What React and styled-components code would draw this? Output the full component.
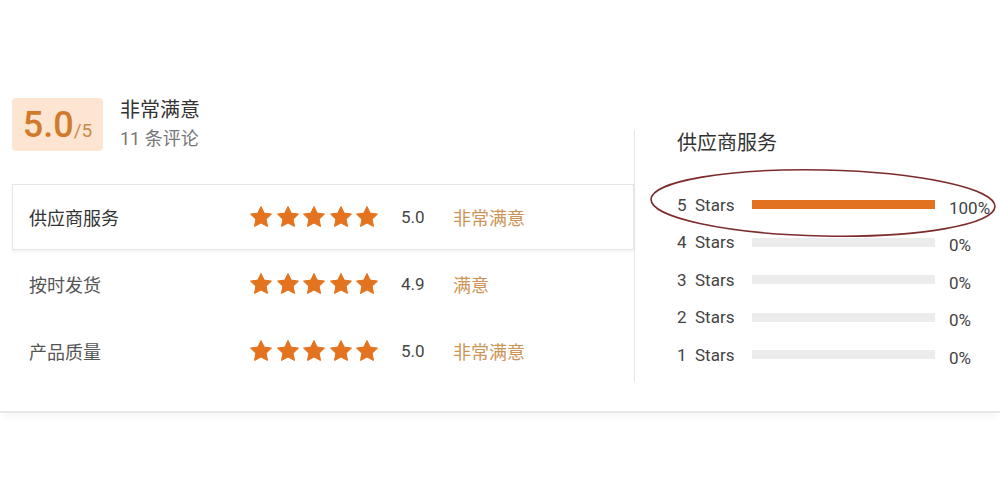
import React from 'react';
import styled, { createGlobalStyle } from 'styled-components';

const GlobalStyle = createGlobalStyle`
	body {
		margin: 0;
		background: #ffffff;
		font-family: Roboto, 'Noto Sans CJK SC', sans-serif;
		color: #333333;
	}
`;

const Page = styled.div`
	width: 1000px;
	height: 478px;
	overflow: hidden;
`;

// Whole review card
const Card = styled.section`
	display: flex;
	padding: 97px 0 27px 12px;
	border-bottom: 2px solid #e8e8e8;
	box-shadow: 0 8px 6px -4px #f6f6f6;
`;

const LeftPanel = styled.div`
	width: 622px;
	display: flex;
	flex-direction: column;
`;

// Score header
const Header = styled.div`
	display: flex;
	align-items: center;
	gap: 17px;
`;

const Badge = styled.div`
	width: 91px;
	height: 53px;
	display: flex;
	align-items: baseline;
	justify-content: center;
	box-sizing: border-box;
	padding-top: 4px;
	background-color: #fde5d2;
	border-radius: 4px;
	color: #d07b2c;
`;

const BigScore = styled.span`
	font-size: 36px;
	font-weight: 500;
	line-height: 46px;
`;

const OutOf = styled.span`
	font-size: 19px;
	color: #c98a4e;
`;

const Summary = styled.div`
	display: flex;
	flex-direction: column;
	gap: 4px;
`;

const SummaryTitle = styled.div`
	font-size: 20px;
	line-height: 26px;
	color: #333333;
`;

const SummaryCount = styled.div`
	font-size: 18px;
	line-height: 24px;
	color: #777777;
`;

// Rating rows
const Rows = styled.ul`
	margin: 33px 0 0;
	padding: 0;
	list-style: none;
`;

const Row = styled.li`
	height: 67px;
	display: flex;
	align-items: center;
	box-sizing: border-box;
	padding-left: 16px;
	border: 1px solid ${props => (props.active ? '#e6e6e6' : 'transparent')};
	box-shadow: ${props => (props.active ? '0 2px 3px rgba(0, 0, 0, 0.05)' : 'none')};
	&:first-child {
		height: 66px;
	}
`;

const RowLabel = styled.span`
	width: 220px;
	font-size: 18px;
	color: ${props => (props.active ? '#333333' : '#555555')};
`;

const Stars = styled.div`
	display: flex;
	gap: 2.5px;
	width: 152px;
`;

const Score = styled.span`
	width: 52px;
	font-size: 17px;
	color: #444444;
`;

const Mood = styled.span`
	font-size: 18px;
	color: #cc9455;
`;

// Right distribution panel
const RightPanel = styled.div`
	position: relative;
	margin-top: 33px;
	height: 252px;
	border-left: 1px solid #e6e6e6;
	padding-left: 42px;
	flex: 1;
`;

const PanelTitle = styled.div`
	font-size: 20px;
	line-height: 26px;
	color: #333333;
	margin-bottom: 30px;
`;

const DistRow = styled.div`
	display: flex;
	align-items: center;
	height: 37.5px;
	font-size: 17px;
	color: #444444;
`;

const StarCount = styled.span`
	width: 75px;
	white-space: pre;
`;

const Track = styled.div`
	width: 183px;
	height: 9px;
	background-color: #ececec;
	margin-right: 14px;
`;

const Fill = styled.div`
	height: 100%;
	background-color: #e2721f;
`;

const Percent = styled.span`
	padding-top: 6px;
`;

const Annotation = styled.svg`
	position: absolute;
	left: 12px;
	top: 34px;
	pointer-events: none;
`;

const Star = () => (
	<svg width="24" height="24" viewBox="0 0 24 24">
		<polygon
			points="12,1.5 15.2,8.1 22.5,9.1 17.2,14.2 18.5,21.5 12,18 5.5,21.5 6.8,14.2 1.5,9.1 8.8,8.1"
			fill="#e3731f"
			stroke="#e3731f"
			strokeLinejoin="round"
			strokeWidth="1"
		/>
	</svg>
);

const ratings = [
	{ id: 'service', name: '供应商服务', score: '5.0', mood: '非常满意', active: true },
	{ id: 'delivery', name: '按时发货', score: '4.9', mood: '满意' },
	{ id: 'quality', name: '产品质量', score: '5.0', mood: '非常满意' },
];

const distribution = [
	{ stars: 5, percent: 100 },
	{ stars: 4, percent: 0 },
	{ stars: 3, percent: 0 },
	{ stars: 2, percent: 0 },
	{ stars: 1, percent: 0 },
];

const App = () => (
	<Page>
		<GlobalStyle />
		<Card>
			<LeftPanel>
				<Header>
					<Badge>
						<BigScore>5.0</BigScore>
						<OutOf>/5</OutOf>
					</Badge>
					<Summary>
						<SummaryTitle>非常满意</SummaryTitle>
						<SummaryCount>11 条评论</SummaryCount>
					</Summary>
				</Header>
				<Rows>
					{ratings.map(item => (
						<Row key={item.id} active={item.active}>
							<RowLabel active={item.active}>{item.name}</RowLabel>
							<Stars>
								{[1, 2, 3, 4, 5].map(n => (
									<Star key={n} />
								))}
							</Stars>
							<Score>{item.score}</Score>
							<Mood>{item.mood}</Mood>
						</Row>
					))}
				</Rows>
			</LeftPanel>
			<RightPanel>
				<PanelTitle>供应商服务</PanelTitle>
				{distribution.map(d => (
					<DistRow key={d.stars}>
						<StarCount>{`${d.stars}  Stars`}</StarCount>
						<Track>
							<Fill style={{ width: `${d.percent}%` }} />
						</Track>
						<Percent>{d.percent}%</Percent>
					</DistRow>
				))}
				<Annotation width="354" height="80" viewBox="0 0 354 80">
					<ellipse
						cx="176"
						cy="39"
						rx="172"
						ry="33"
						fill="none"
						stroke="#7d2b2b"
						strokeWidth="1.6"
						transform="rotate(1.2 176 39)"
					/>
				</Annotation>
			</RightPanel>
		</Card>
	</Page>
);

export default App;
